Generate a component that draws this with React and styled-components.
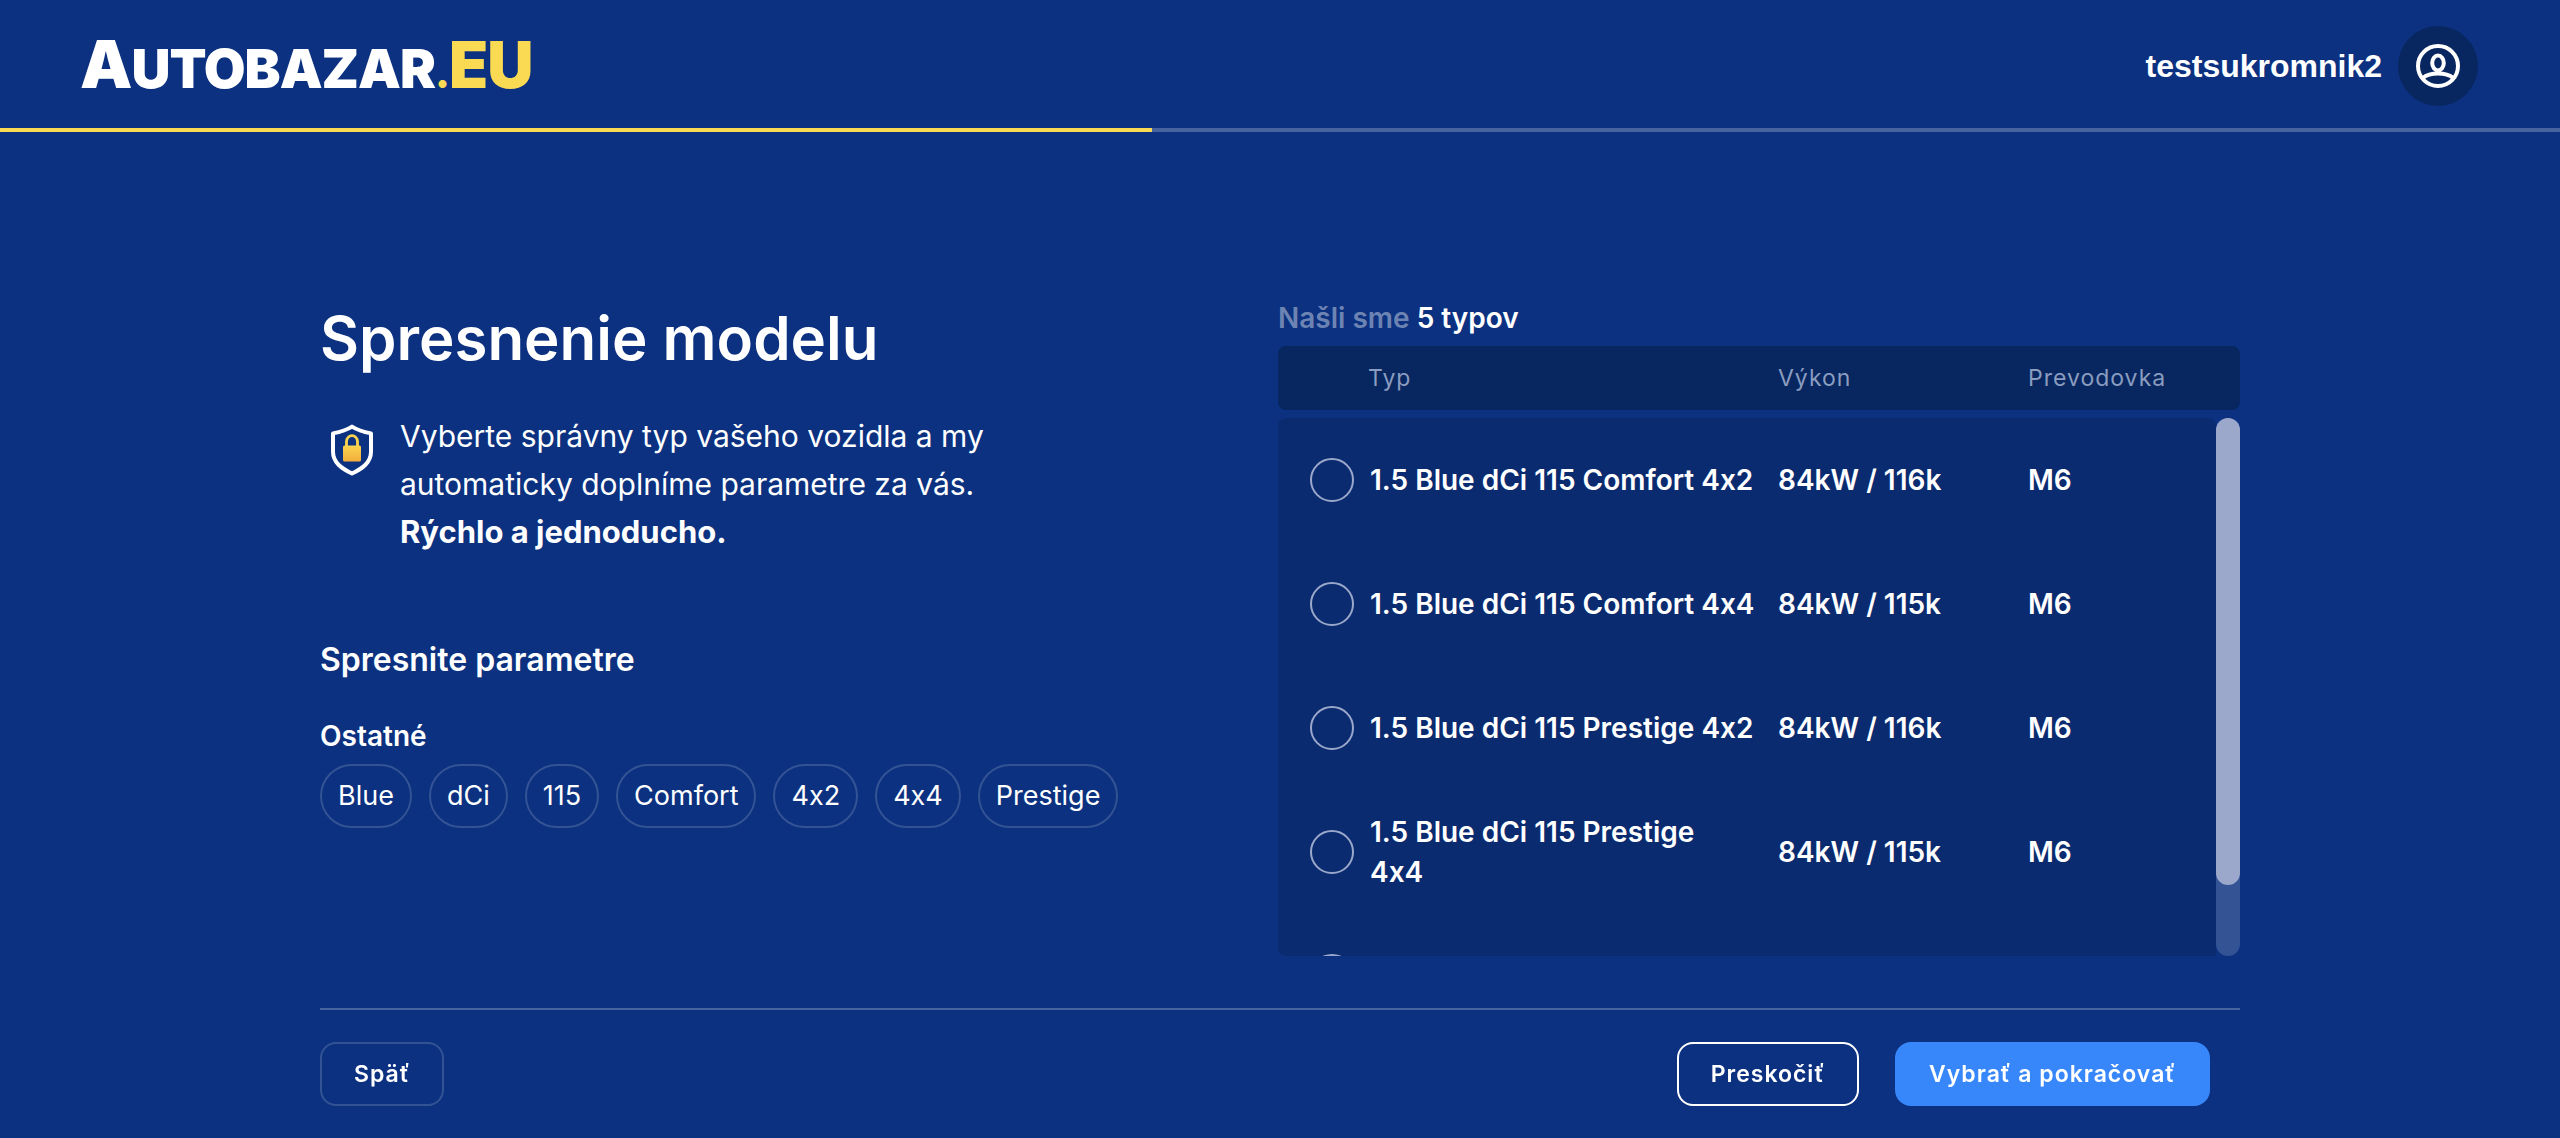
import React, { useEffect, useRef, useState } from "react";
import styled, { createGlobalStyle } from "styled-components";

const GlobalStyle = createGlobalStyle`
  *, *::before, *::after { box-sizing: border-box; }
  body {
    margin: 0;
    background: #0b3180;
    color: #fff;
    font-family: Inter, "Liberation Sans", sans-serif;
    font-variant-ligatures: no-contextual;
    -webkit-font-smoothing: antialiased;
  }
  button { font-family: inherit; font-variant-ligatures: inherit; cursor: pointer; }
`;

const Page = styled.div`
  min-height: 100vh;
  display: flex;
  flex-direction: column;
`;

const Header = styled.header`
  display: flex;
  align-items: center;
  justify-content: space-between;
  height: 128px;
  padding: 4px 82px 0 80px;
`;

const Logo = styled.a`
  display: flex;
  align-items: baseline;
  padding-top: 6px;
  color: #fff;
  font-size: 54px;
  line-height: 64px;
  font-weight: 900;
  letter-spacing: -1px;
  text-decoration: none;
`;

const LogoBig = styled.span`
  font-size: 66px;
`;

const LogoDomain = styled.span`
  color: #fad953;
  font-size: ${(p) => (p.$big ? "64px" : "40px")};
`;

const User = styled.a`
  display: flex;
  align-items: center;
  gap: 16px;
  color: #fff;
  font: bold 32px/40px "Liberation Sans", Arial, sans-serif;
  text-decoration: none;
`;

const Avatar = styled.span`
  display: grid;
  place-items: center;
  width: 80px;
  height: 80px;
  border-radius: 50%;
  background: #08265f;
`;

const Progress = styled.div`
  height: 4px;
  background: #4864a0;
`;

const ProgressFill = styled.div`
  width: 45%;
  height: 100%;
  background: #fad953;
`;

const Main = styled.main`
  width: 75%;
  margin: 0 auto;
  padding-top: 166px;
  display: grid;
  grid-template-columns: minmax(0, 958fr) minmax(0, 962fr);
`;

const Title = styled.h1`
  margin: 0;
  font-size: 60px;
  line-height: 80px;
  font-weight: 600;
`;

const Intro = styled.div`
  display: flex;
  gap: 16px;
  margin-top: 34px;
`;

const IntroText = styled.p`
  margin: 0;
  width: 640px;
  font-size: 30px;
  line-height: 48px;
  font-weight: 400;

  strong { font-size: 31px; }
`;

const IconSlot = styled.span`
  width: 64px;
  height: 64px;
  margin-top: 6px;
  display: grid;
  place-items: center;
`;

const SectionTitle = styled.h2`
  margin: 80px 0 0;
  font-size: 32px;
  line-height: 48px;
  font-weight: 600;
`;

const Group = styled.fieldset`
  border: 0;
  margin: 32px 0 0;
  padding: 0;
`;

const Legend = styled.legend`
  padding: 0;
  font-size: 28px;
  line-height: 40px;
  font-weight: 600;
`;

const Chips = styled.div`
  display: flex;
  flex-wrap: wrap;
  gap: 17px;
  padding-top: 8px;
`;

const Chip = styled.button`
  height: 64px;
  padding: 0 16px;
  border: 2px solid #335394;
  border-radius: 32px;
  background: transparent;
  color: #fff;
  font-size: 27px;
  line-height: 40px;
`;

const Found = styled.p`
  margin: 0;
  padding-bottom: 8px;
  font-size: 28px;
  line-height: 40px;
  font-weight: 600;
  color: #6d84b3;

  strong { color: #fff; font-weight: 600; }
`;

const TableArea = styled.div`
  display: grid;
  grid-template-columns: minmax(0, 1fr) 24px;
  row-gap: 8px;
`;

const Table = styled.table`
  display: contents;
`;

const Head = styled.thead`
  display: block;
  grid-column: 1 / -1;
  padding-right: 24px;
  border-radius: 8px;
  background: #08265f;
`;

const Body = styled.tbody`
  display: block;
  height: 538px;
  overflow-y: auto;
  scrollbar-width: none;
  border-radius: 8px 8px 0 8px;
  background: #0a2b70;
`;

const Row = styled.tr`
  display: grid;
  grid-template-columns: 90px minmax(0, 1fr) 250px 188px;
  align-items: center;
  height: ${(p) => (p.$head ? "64px" : "124px")};
`;

const HeadCell = styled.th`
  padding: 0;
  text-align: left;
  color: #8a9cbf;
  font-size: 23px;
  line-height: 32px;
  font-weight: 400;
  letter-spacing: 1px;
`;

const Cell = styled.td`
  padding: 0 16px 0 0;
  font-size: 28px;
  line-height: 40px;
  font-weight: 600;
`;

const RadioCell = styled(Cell)`
  display: flex;
  padding: 0 0 0 32px;
`;

const Radio = styled.input`
  appearance: none;
  width: 44px;
  height: 44px;
  margin: 0;
  border: 2px solid #9ba8cb;
  border-radius: 50%;
  cursor: pointer;

  &:checked { background: #3787fa; border-color: #fff; }
`;

const NameLabel = styled.label`
  display: block;
  padding-left: 2px;
  white-space: pre-line;
`;

const Track = styled.div`
  border-radius: 12px;
  background: #335394;
`;

const Thumb = styled.div`
  border-radius: 12px;
  background: #9ba8cb;
`;

const Footer = styled.footer`
  width: 75%;
  margin: 52px auto 0;
  padding: 32px 30px 32px 0;
  border-top: 2px solid #4864a0;
  display: flex;
  justify-content: space-between;
`;

const Actions = styled.div`
  display: flex;
  gap: 36px;
`;

const Button = styled.button`
  height: 64px;
  padding: 0 32px;
  border: 2px solid ${(p) => ({ ghost: "#335394", outline: "#fff", primary: "#3787fa" })[p.$kind]};
  border-radius: 16px;
  background: ${(p) => (p.$kind === "primary" ? "#3787fa" : "transparent")};
  color: #fff;
  font-size: 23px;
  line-height: 32px;
  font-weight: 600;
  letter-spacing: 1px;
`;

const UserIcon = () => (
  <svg width="44" height="44" viewBox="0 0 44 44" fill="none" stroke="#fff" strokeWidth="4" aria-hidden="true">
    <circle cx="22" cy="22" r="20" />
    <ellipse cx="22" cy="19" rx="5.800" ry="7.400" />
    <path d="M6.500 34.200C10.500 31 16 29.600 22 29.600s11.500 1.400 15.500 4.600" />
  </svg>
);

const ShieldIcon = () => (
  <svg width="44" height="52" viewBox="0 0 44 52" fill="none" aria-hidden="true">
    <defs>
      <linearGradient id="lock" x1="0" y1="0" x2="0" y2="1">
        <stop offset="0" stopColor="#fbd34e" />
        <stop offset="1" stopColor="#f2ad3c" />
      </linearGradient>
    </defs>
    <path
      d="M22 2.600C27 5.800 34 8 41 9.400V27.500C41 38.500 32.500 44.500 22 49.500C11.500 44.500 3 38.500 3 27.500V9.400C10 8 17 5.800 22 2.600Z"
      stroke="#fff"
      strokeWidth="4"
      strokeLinejoin="round"
    />
    <path d="M16.500 22.500v-5a5.500 5.800 0 0 1 11 0v5" stroke="#fbd34e" strokeWidth="2.800" />
    <rect x="13" y="21.500" width="18" height="16" rx="1.500" fill="url(#lock)" />
  </svg>
);

const tags = ["Blue", "dCi", "115", "Comfort", "4x2", "4x4", "Prestige"];

const types = [
  ["1.5 Blue dCi 115 Comfort 4x2", "84kW / 116k", "M6"],
  ["1.5 Blue dCi 115 Comfort 4x4", "84kW / 115k", "M6"],
  ["1.5 Blue dCi 115 Prestige 4x2", "84kW / 116k", "M6"],
  ["1.5 Blue dCi 115 Prestige\n4x4", "84kW / 115k", "M6"],
  ["", "", ""],
];

function TypeTable() {
  const bodyRef = useRef(null);
  const [thumb, setThumb] = useState({ size: 100, offset: 0 });

  const measure = () => {
    const el = bodyRef.current;
    setThumb({
      size: (el.clientHeight / el.scrollHeight) * 100,
      offset: (el.scrollTop / el.scrollHeight) * el.clientHeight,
    });
  };

  useEffect(measure, []);

  return (
    <TableArea>
      <Table>
        <Head>
          <Row $head>
            <HeadCell />
            <HeadCell scope="col">Typ</HeadCell>
            <HeadCell scope="col">Výkon</HeadCell>
            <HeadCell scope="col">Prevodovka</HeadCell>
          </Row>
        </Head>
        <Body ref={bodyRef} onScroll={measure}>
          {types.map(([name, power, gearbox], i) => (
            <Row key={i}>
              <RadioCell>
                <Radio type="radio" name="type" id={`type-${i}`} />
              </RadioCell>
              <Cell>
                <NameLabel htmlFor={`type-${i}`}>{name}</NameLabel>
              </Cell>
              <Cell>{power}</Cell>
              <Cell>{gearbox}</Cell>
            </Row>
          ))}
        </Body>
      </Table>
      <Track>
        <Thumb style={{ height: `${thumb.size}%`, transform: `translateY(${thumb.offset}px)` }} />
      </Track>
    </TableArea>
  );
}

export default function App() {
  return (
    <Page>
      <GlobalStyle />
      <Header>
        <Logo href="#">
          <LogoBig>A</LogoBig>
          <span>UTOBAZAR</span>
          <LogoDomain>.</LogoDomain>
          <LogoDomain $big>EU</LogoDomain>
        </Logo>
        <User href="#">
          testsukromnik2
          <Avatar>
            <UserIcon />
          </Avatar>
        </User>
      </Header>
      <Progress>
        <ProgressFill />
      </Progress>
      <Main>
        <div>
          <Title>Spresnenie modelu</Title>
          <Intro>
            <IconSlot>
              <ShieldIcon />
            </IconSlot>
            <IntroText>
              Vyberte správny typ vašeho vozidla a my
              <br />
              automaticky doplníme parametre za vás.
              <br />
              <strong>Rýchlo a jednoducho.</strong>
            </IntroText>
          </Intro>
          <SectionTitle>Spresnite parametre</SectionTitle>
          <Group>
            <Legend>Ostatné</Legend>
            <Chips>
              {tags.map((tag) => (
                <Chip key={tag} type="button">
                  {tag}
                </Chip>
              ))}
            </Chips>
          </Group>
        </div>
        <section>
          <Found>
            Našli sme <strong>5 typov</strong>
          </Found>
          <TypeTable />
        </section>
      </Main>
      <Footer>
        <Button type="button" $kind="ghost">Späť</Button>
        <Actions>
          <Button type="button" $kind="outline">Preskočiť</Button>
          <Button type="button" $kind="primary">Vybrať a pokračovať</Button>
        </Actions>
      </Footer>
    </Page>
  );
}
